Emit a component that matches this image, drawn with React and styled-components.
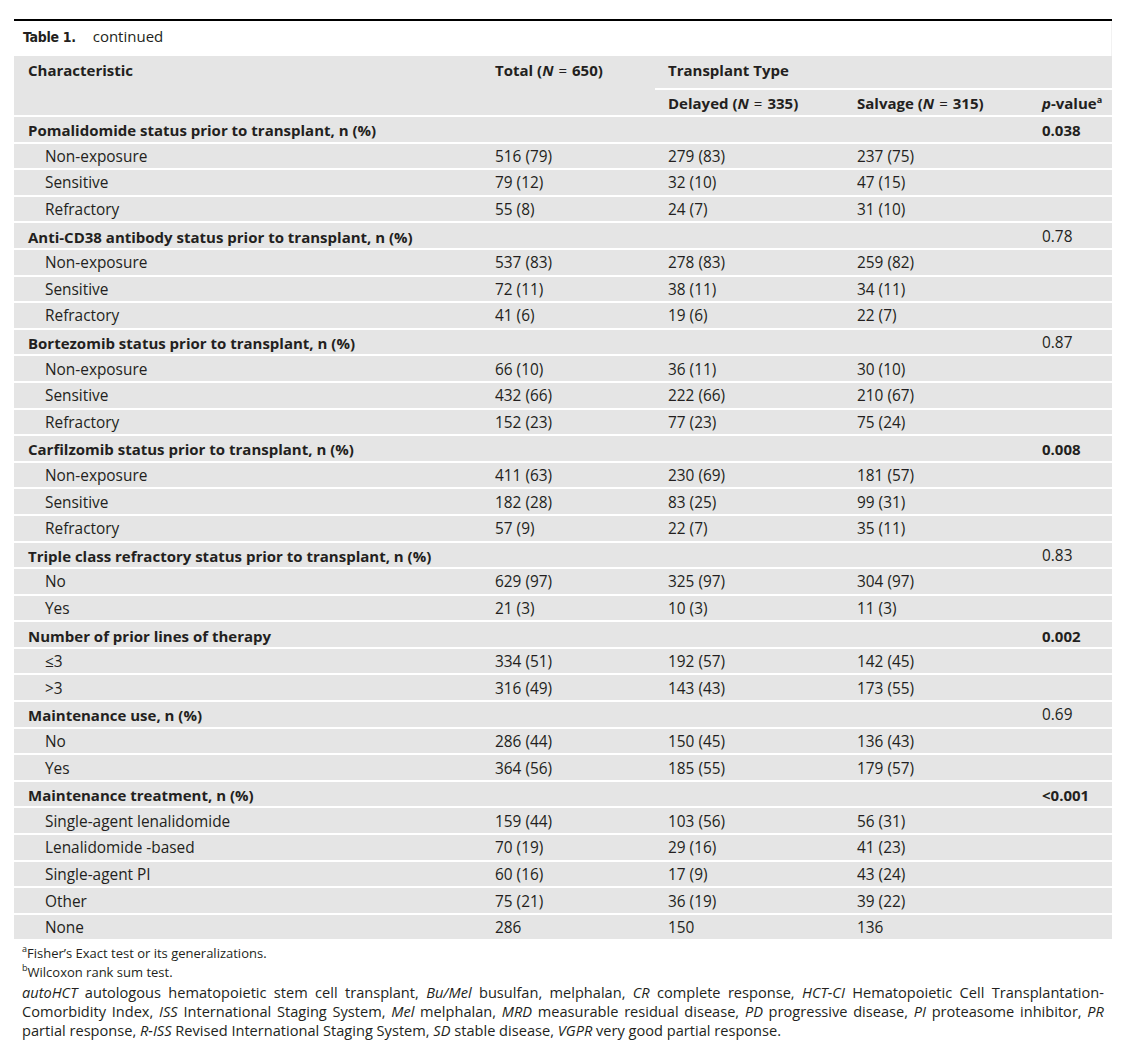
import React from "react";
import styled, { createGlobalStyle } from "styled-components";

const Global = createGlobalStyle`
  html, body { margin: 0; padding: 0; background: #ffffff; }
  body { font-family: "Open Sans", "Noto Sans", sans-serif; color: #231f20; }
`;

const Page = styled.div`
  width: 1134px;
  height: 1060px;
  padding: 19px 22px 0 14px;
  box-sizing: border-box;
`;

const TopRule = styled.div`
  width: 1098px;
  height: 2px;
  background: #000;
`;

const Caption = styled.div`
  width: 1098px;
  height: 35px;
  box-sizing: border-box;
  padding: 5px 0 0 9px;
  font-size: 15px;
  border-right: 1px solid #f2f2f2;
  display: flex;
  align-items: baseline;
  gap: 17px;
`;

const CaptionLabel = styled.span`
  font-family: "DejaVu Sans Condensed", "DejaVu Sans", sans-serif;
  font-stretch: condensed;
  font-weight: 700;
  font-size: 14px;
  letter-spacing: -0.3px;
`;

const Table = styled.table`
  width: 1098px;
  border-collapse: separate;
  border-spacing: 0;
  table-layout: fixed;
  background: #e5e5e5;
  font-size: 15.4px;
`;

const Th = styled.th`
  text-align: left;
  font-weight: 700;
  font-size: 15px;
  vertical-align: ${(p) => (p.$top ? "top" : "middle")};
  padding: ${(p) => (p.$top ? "4px" : "1px")} 0 0 ${(p) => (p.$first ? "14px" : "13px")};
  height: ${(p) => p.$h || 24}px;
  box-sizing: content-box;
  border-top: ${(p) => (p.$line ? "2px solid #fff" : "0")};
  white-space: nowrap;
`;

const Td = styled.td`
  padding: 2px 0 0 ${(p) => (p.$indent ? "31px" : p.$first ? "14px" : "13px")};
  height: 22.6px;
  border-top: 2px solid #fff;
  font-weight: ${(p) => (p.$bold ? 700 : 400)};
  font-size: ${(p) => (p.$bold ? "15px" : "15.4px")};
  white-space: nowrap;
  vertical-align: middle;
  line-height: 20px;
`;

const Eq = styled.span`
  font-weight: 400;
  margin: 0 5px;
`;

const Sup = styled.sup`
  font-size: 9px;
  line-height: 0;
  vertical-align: 6px;
`;

const Notes = styled.div`
  padding: 5px 0 0 8px;
  width: 1082px;
  font-size: 13px;
  line-height: 18.5px;
`;

const NoteLine = styled.div``;

const Abbrev = styled.div`
  margin-top: 2px;
  font-size: 14.6px;
  line-height: 19px;
`;

const JustLine = styled.span`
  display: block;
  white-space: nowrap;
  text-align: justify;
  text-align-last: ${(p) => (p.$last ? "left" : "justify")};
`;

const N = ({ n }) => (
  <>
    (<i>N</i>
    <Eq>=</Eq>
    {n})
  </>
);

const sections = [
  {
    title: "Pomalidomide status prior to transplant, n (%)",
    p: "0.038",
    pb: true,
    rows: [
      ["Non-exposure", "516 (79)", "279 (83)", "237 (75)"],
      ["Sensitive", "79 (12)", "32 (10)", "47 (15)"],
      ["Refractory", "55 (8)", "24 (7)", "31 (10)"],
    ],
  },
  {
    title: "Anti-CD38 antibody status prior to transplant, n (%)",
    p: "0.78",
    rows: [
      ["Non-exposure", "537 (83)", "278 (83)", "259 (82)"],
      ["Sensitive", "72 (11)", "38 (11)", "34 (11)"],
      ["Refractory", "41 (6)", "19 (6)", "22 (7)"],
    ],
  },
  {
    title: "Bortezomib status prior to transplant, n (%)",
    p: "0.87",
    rows: [
      ["Non-exposure", "66 (10)", "36 (11)", "30 (10)"],
      ["Sensitive", "432 (66)", "222 (66)", "210 (67)"],
      ["Refractory", "152 (23)", "77 (23)", "75 (24)"],
    ],
  },
  {
    title: "Carfilzomib status prior to transplant, n (%)",
    p: "0.008",
    pb: true,
    rows: [
      ["Non-exposure", "411 (63)", "230 (69)", "181 (57)"],
      ["Sensitive", "182 (28)", "83 (25)", "99 (31)"],
      ["Refractory", "57 (9)", "22 (7)", "35 (11)"],
    ],
  },
  {
    title: "Triple class refractory status prior to transplant, n (%)",
    p: "0.83",
    rows: [
      ["No", "629 (97)", "325 (97)", "304 (97)"],
      ["Yes", "21 (3)", "10 (3)", "11 (3)"],
    ],
  },
  {
    title: "Number of prior lines of therapy",
    p: "0.002",
    pb: true,
    rows: [
      ["≤3", "334 (51)", "192 (57)", "142 (45)"],
      [">3", "316 (49)", "143 (43)", "173 (55)"],
    ],
  },
  {
    title: "Maintenance use, n (%)",
    p: "0.69",
    rows: [
      ["No", "286 (44)", "150 (45)", "136 (43)"],
      ["Yes", "364 (56)", "185 (55)", "179 (57)"],
    ],
  },
  {
    title: "Maintenance treatment, n (%)",
    p: "<0.001",
    pb: true,
    rows: [
      ["Single-agent lenalidomide", "159 (44)", "103 (56)", "56 (31)"],
      ["Lenalidomide -based", "70 (19)", "29 (16)", "41 (23)"],
      ["Single-agent PI", "60 (16)", "17 (9)", "43 (24)"],
      ["Other", "75 (21)", "36 (19)", "39 (22)"],
      ["None", "286", "150", "136"],
    ],
  },
];

export default function App() {
  return (
    <>
      <Global />
      <Page>
        <TopRule />
        <Caption>
          <CaptionLabel>Table 1.</CaptionLabel>
          <span>continued</span>
        </Caption>
        <Table>
          <colgroup>
            <col style={{ width: 468 }} />
            <col style={{ width: 173 }} />
            <col style={{ width: 189 }} />
            <col style={{ width: 185 }} />
            <col style={{ width: 83 }} />
          </colgroup>
          <thead>
            <tr>
              <Th $first $top rowSpan={2}>
                Characteristic
              </Th>
              <Th $top rowSpan={2}>
                Total <N n="650" />
              </Th>
              <Th $top colSpan={3} $h={28}>
                Transplant Type
              </Th>
            </tr>
            <tr>
              <Th $line>
                Delayed <N n="335" />
              </Th>
              <Th $line>
                Salvage <N n="315" />
              </Th>
              <Th $line>
                <i>p</i>-value<Sup>a</Sup>
              </Th>
            </tr>
          </thead>
          <tbody>
            {sections.map((s) => (
              <React.Fragment key={s.title}>
                <tr>
                  <Td $first $bold>
                    {s.title}
                  </Td>
                  <Td />
                  <Td />
                  <Td />
                  <Td $bold={s.pb}>{s.p}</Td>
                </tr>
                {s.rows.map((r) => (
                  <tr key={s.title + r[0]}>
                    <Td $indent>{r[0]}</Td>
                    <Td>{r[1]}</Td>
                    <Td>{r[2]}</Td>
                    <Td>{r[3]}</Td>
                    <Td />
                  </tr>
                ))}
              </React.Fragment>
            ))}
          </tbody>
        </Table>
        <Notes>
          <NoteLine>
            <Sup>a</Sup>Fisher’s Exact test or its generalizations.
          </NoteLine>
          <NoteLine>
            <Sup>b</Sup>Wilcoxon rank sum test.
          </NoteLine>
          <Abbrev>
            <JustLine>
              <i>autoHCT</i> autologous hematopoietic stem cell transplant, <i>Bu/Mel</i> busulfan, melphalan,{" "}
              <i>CR</i> complete response, <i>HCT-CI</i> Hematopoietic Cell Transplantation-
            </JustLine>
            <JustLine>
              Comorbidity Index, <i>ISS</i> International Staging System, <i>Mel</i> melphalan, <i>MRD</i>{" "}
              measurable residual disease, <i>PD</i> progressive disease, <i>PI</i> proteasome inhibitor,{" "}
              <i>PR</i>
            </JustLine>
            <JustLine $last>
              partial response, <i>R-ISS</i> Revised International Staging System, <i>SD</i> stable disease,{" "}
              <i>VGPR</i> very good partial response.
            </JustLine>
          </Abbrev>
        </Notes>
      </Page>
    </>
  );
}
